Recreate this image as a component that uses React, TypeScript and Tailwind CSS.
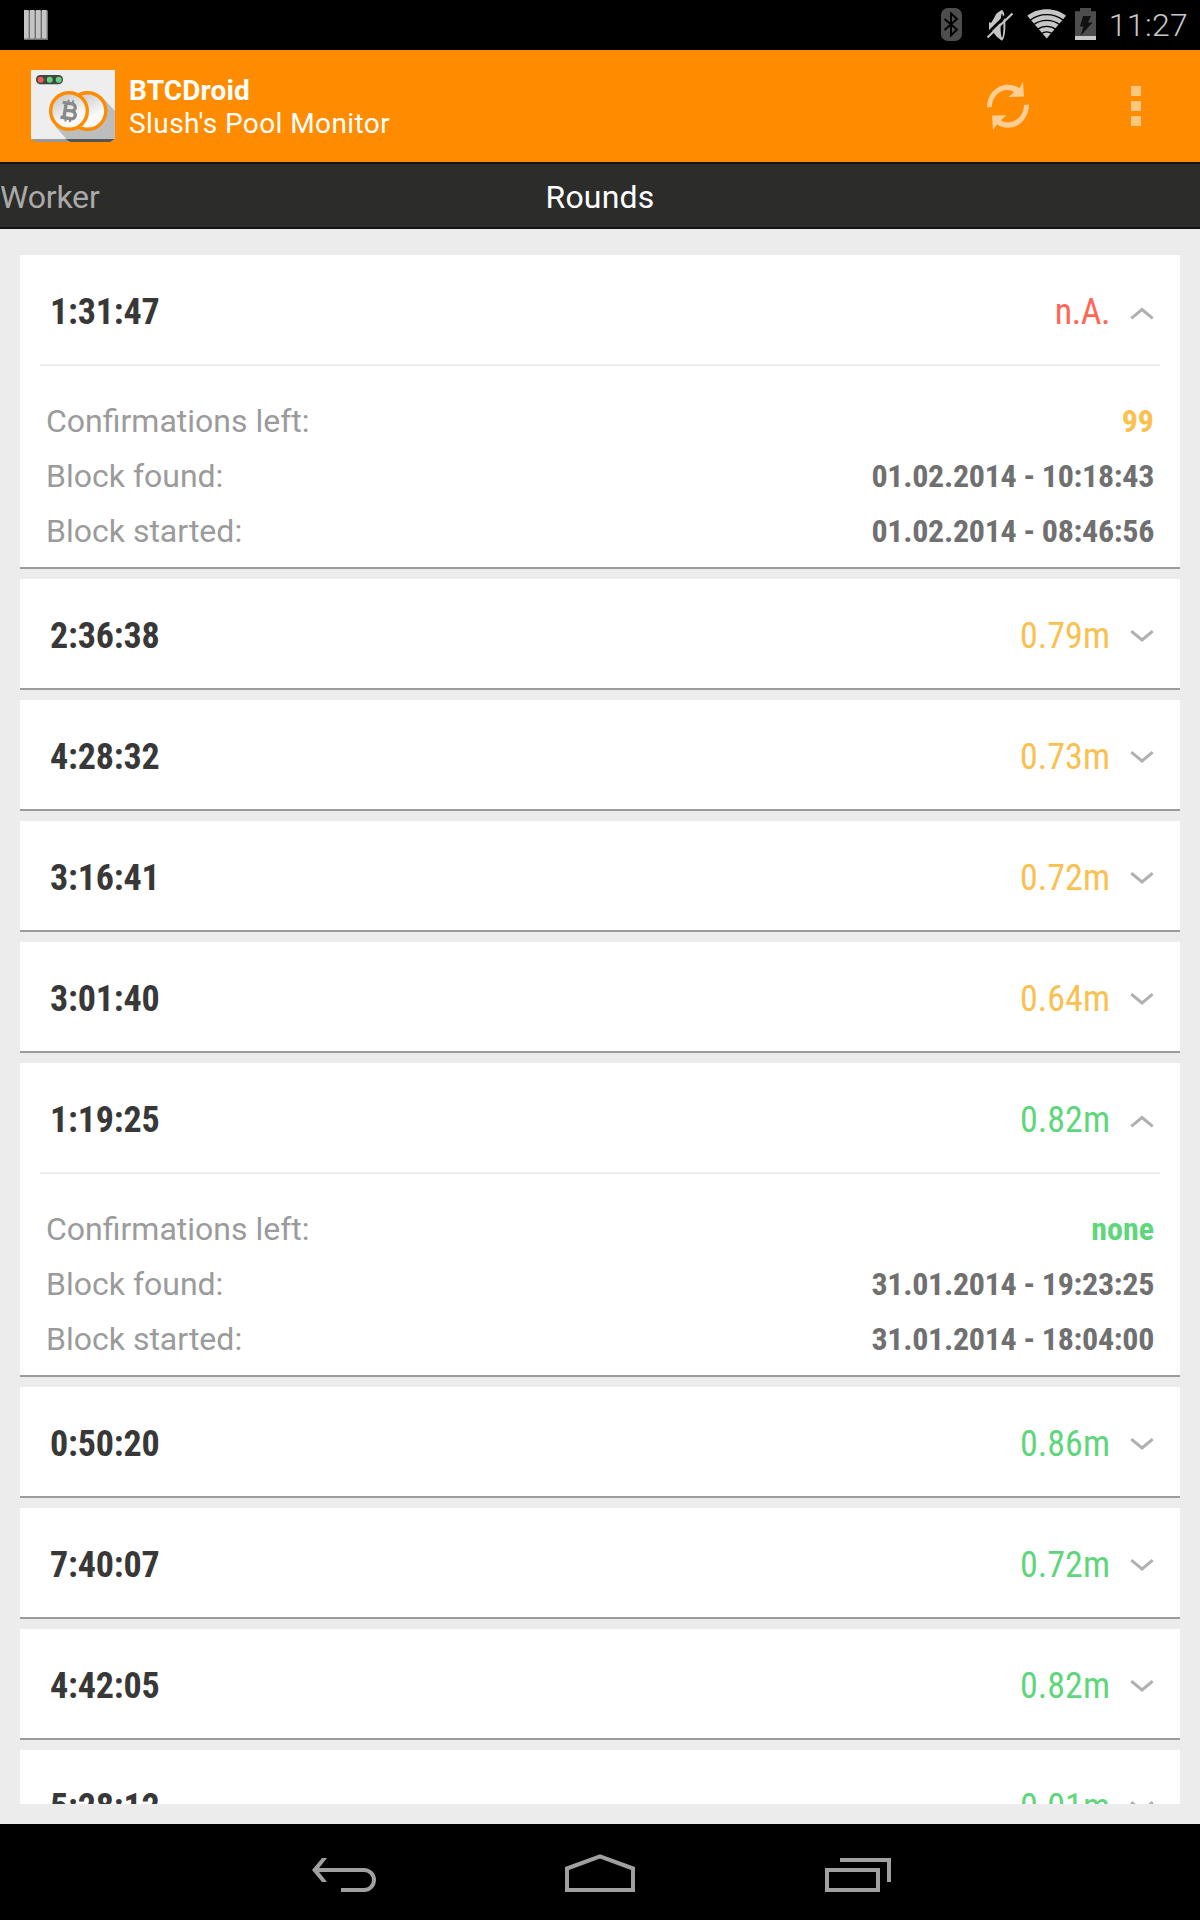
import type { ReactNode } from "react";

type Tone = "red" | "amber" | "green";

type Details = { confirmations: string; found: string; started: string };

type Round = { duration: string; reward: string; tone: Tone; details?: Details };

const toneClass: Record<Tone, string> = {
  red: "text-[#ff6655] tracking-[-0.5px]",
  amber: "text-[#fac050]",
  green: "text-[#5fd67c]",
};

const rounds: Round[] = [
  {
    duration: "1:31:47",
    reward: "n.A.",
    tone: "red",
    details: { confirmations: "99", found: "01.02.2014 - 10:18:43", started: "01.02.2014 - 08:46:56" },
  },
  { duration: "2:36:38", reward: "0.79m", tone: "amber" },
  { duration: "4:28:32", reward: "0.73m", tone: "amber" },
  { duration: "3:16:41", reward: "0.72m", tone: "amber" },
  { duration: "3:01:40", reward: "0.64m", tone: "amber" },
  {
    duration: "1:19:25",
    reward: "0.82m",
    tone: "green",
    details: { confirmations: "none", found: "31.01.2014 - 19:23:25", started: "31.01.2014 - 18:04:00" },
  },
  { duration: "0:50:20", reward: "0.86m", tone: "green" },
  { duration: "7:40:07", reward: "0.72m", tone: "green" },
  { duration: "4:42:05", reward: "0.82m", tone: "green" },
  { duration: "5:28:12", reward: "0.01m", tone: "green" },
];

function StatusBar() {
  return (
    <div className="flex h-[50px] shrink-0 items-center justify-between bg-black pl-6 pr-3">
      <svg width="24" height="30" viewBox="0 0 24 30">
        {[0, 6, 12, 18].map((x) => (
          <g key={x}>
            <rect x={x} y="0.5" width="6" height="29.5" fill="#6e6e6e" />
            <rect x={x} y="0" width="4.6" height="28.5" fill="#c4c4c4" />
          </g>
        ))}
      </svg>
      <div className="flex h-full items-start">
        <svg width="166" height="50" viewBox="1034 0 166 50">
          <rect x="1041" y="8" width="21" height="33" rx="7" fill="#4d4d4d" />
          <path d="M1044.500 19l12.500 10.500-6 6V13.500l6 5.500-12.500 11" fill="none" stroke="#000" strokeWidth="1.900" />
          <path d="M1089 22.500h2.500l5-9 5-3.500c2.500 0 3.900 6.500 3.900 15s-1.400 15.500-3.900 15.500l-5-4-5-6.500h-2.500z" fill="#c6c6c6" />
          <ellipse cx="1102" cy="25.500" rx="1.500" ry="12" fill="#000" />
          <path d="M1085.500 35.500l25-24.500" stroke="#000" strokeWidth="2.800" />
          <path d="M1087.500 37.500l25-24" stroke="#c6c6c6" strokeWidth="2.100" />
          <path d="M1146.700 38.600L1127.300 15.800C1138 7.200 1155.400 7.200 1166 15.800z" fill="#c6c6c6" />
          <g fill="none" stroke="#000" strokeWidth="1.300">
            <path d="M1130 20.300c9.500-7.600 24-7.600 33.400 0" />
            <path d="M1133.500 24.800c7.500-5.900 19-5.900 26.400 0" />
            <path d="M1137.500 29.400c5.200-4 13.200-4 18.400 0" />
            <path d="M1141.500 33.600c3-2.300 7.400-2.300 10.400 0" />
          </g>
          <path d="M1175 11.300h5V8h11v3.300h5V36h-21z" fill="#4d4d4d" />
          <path d="M1175 36h21v4h-21z" fill="#c9c9c9" />
          <path d="M1183 16h8l-3 6.500h4.500L1180.500 36l3-9.500h-3.500z" fill="#111" />
        </svg>
        <span className="ml-[9px] text-[32px] font-light leading-[50px] tracking-[0.3px] text-[#c8c8c8]">11:27</span>
      </div>
    </div>
  );
}

function AppLogo() {
  return (
    <svg width="84" height="72" viewBox="0 0 84 72">
      <defs>
        <linearGradient id="coin" x1="0.2" y1="0" x2="0.7" y2="1">
          <stop offset="0" stopColor="#c4c4c4" />
          <stop offset="0.7" stopColor="#fafafa" />
        </linearGradient>
      </defs>
      <path d="M0 68h84l-4.500 4h-75z" fill="#999" />
      <rect width="84" height="69" fill="#eee" />
      <path d="M70 26l14 15v31H38L24 56z" fill="#bdbdbd" />
      <path d="M34.500 69H84l-4.500 3H39z" fill="#555" />
      <path d="M79.500 72L84 69v3z" fill="#ff8c00" />
      <rect x="5" y="5.500" width="27" height="9.500" rx="4.700" fill="#bbb" />
      <rect x="5" y="5" width="27" height="9" rx="4.500" fill="#444" />
      <circle cx="9.700" cy="9.700" r="3" fill="#f05e50" />
      <circle cx="18.700" cy="9.700" r="3" fill="#5fd67c" />
      <circle cx="27.700" cy="9.700" r="3" fill="#5fd67c" />
      <circle cx="56.500" cy="41" r="18.300" fill="url(#coin)" stroke="#ff8c00" strokeWidth="3.400" />
      <circle cx="38" cy="41" r="18.300" fill="url(#coin)" stroke="#ff8c00" strokeWidth="3.400" />
      <g transform="translate(38.500 41) rotate(9)" fill="none" stroke="#8a8a8a">
        <path d="M-8-7.500H1.500a3.500 3.500 0 0 1 0 7.200H-4.500M1.500-0.300H2.500a3.800 3.800 0 0 1 0 7.800H-8M-4.500-7.500V7.500" strokeWidth="3.400" />
        <path d="M-2.500-11v4M2-11v4M-2.500 7v4M2 7v4" strokeWidth="2" />
      </g>
    </svg>
  );
}

function ActionBar() {
  return (
    <header className="flex h-28 shrink-0 items-center bg-[#ff8c00] pl-[31px] pr-[59px] text-white">
      <div className="mb-[1px] h-[72px]">
        <AppLogo />
      </div>
      <div className="ml-[14px] flex flex-col pt-[2px] text-[28px] leading-[33px]">
        <span className="font-bold tracking-[0.15px]">BTCDroid</span>
        <span className="tracking-[0.42px]">Slush's Pool Monitor</span>
      </div>
      <svg className="ml-auto" width="44" height="50" viewBox="986 81 44 50">
        <g fill="#ffce94">
          <path d="M987 107.500C987 95 996 84.700 1008 84.700c4.500 0 8.500 1.300 11.500 3.400L1023 82l1 14.500-15.500.5 5.500-4.800c-2-1.500-4-2.200-6.500-2.200-9 0-15.700 8-15.700 17z" />
          <path d="M1029 104.500C1029 117 1020 127.700 1008 127.700c-4.500 0-8.500-1.300-11-3.400L993 130l-1-14.500 14.500-.3-5.500 5c2 1.500 4.500 2.200 7 2.200 9 0 16-8 16-17.400z" />
        </g>
      </svg>
      <div className="ml-[101px] flex flex-col gap-[5px]">
        <i className="size-[10px] bg-[#ffc680]" />
        <i className="size-[10px] bg-[#ffc680]" />
        <i className="size-[10px] bg-[#ffc680]" />
      </div>
    </header>
  );
}

function Tabs() {
  return (
    <nav className="grid h-[67px] shrink-0 grid-cols-3 border-y-2 border-[#141414] bg-[#2c2c2a] text-[32px] leading-[66px]">
      <span className="tracking-[-0.2px] text-[#aaaaa8]">Worker</span>
      <span className="text-center tracking-[0.2px] text-white">Rounds</span>
    </nav>
  );
}

function Chevron({ up }: { up: boolean }) {
  return (
    <svg className="mt-[3px]" width="24" height="14" viewBox="0 0 24 14" fill="none" stroke="#b0b0b0" strokeWidth="3">
      <path d={up ? "M1.300 12.300L12 3.500l10.700 8.800" : "M1.300 1.200L12 10l10.700-8.800"} />
    </svg>
  );
}

function DetailRow({ label, tone, children }: { label: string; tone: string; children: ReactNode }) {
  return (
    <div className="flex justify-between text-[32px] leading-[55px]">
      <span className="text-[#9b9b9b]">{label}</span>
      <span className={`font-bold [font-stretch:75%] ${tone}`}>{children}</span>
    </div>
  );
}

function RoundCard({ round }: { round: Round }) {
  const { details } = round;
  return (
    <section className="shrink-0 border-b-2 border-[#9b9b9b] bg-white">
      <div className="flex h-[109px] items-center pl-[30px] pr-[26px] pt-1 text-[36px] leading-[42px]">
        <span className="font-bold tracking-[-0.15px] text-[#383838] [font-stretch:75%]">{round.duration}</span>
        <span className={`ml-auto mr-[20px] [font-stretch:75%] ${toneClass[round.tone]}`}>{round.reward}</span>
        <Chevron up={!!details} />
      </div>
      {details && (
        <div className="mx-5 h-[203px] border-t-2 border-[#ececec] px-[6px] pt-7">
          <DetailRow label="Confirmations left:" tone={round.tone === "green" ? toneClass.green : toneClass.amber}>
            {details.confirmations}
          </DetailRow>
          <DetailRow label="Block found:" tone="text-[#707070] tracking-[-0.3px]">
            {details.found}
          </DetailRow>
          <DetailRow label="Block started:" tone="text-[#707070] tracking-[-0.3px]">
            {details.started}
          </DetailRow>
        </div>
      )}
    </section>
  );
}

function NavigationBar() {
  return (
    <footer className="flex h-24 shrink-0 items-start justify-between bg-black px-[300px] pt-4">
      <svg width="100" height="70" viewBox="0 0 100 70">
        <path d="M16 30H64a10 10 0 0 1 0 20H41" fill="none" stroke="#a0a0a0" strokeWidth="4" />
        <path d="M12 30l10-12h5L17.500 30 27 42h-5z" fill="#a0a0a0" />
      </svg>
      <svg width="100" height="70" viewBox="0 0 100 70" fill="none" stroke="#a0a0a0" strokeWidth="4">
        <path d="M17 50V28.500L50 16.300l33 12.200V50z" />
      </svg>
      <svg width="100" height="70" viewBox="0 0 100 70" fill="none" stroke="#a0a0a0" strokeWidth="4">
        <path d="M27 30h51v20H27zM40 20h49v22" />
      </svg>
    </footer>
  );
}

export default function App() {
  return (
    <div className="flex h-[1920px] w-[1200px] flex-col overflow-hidden bg-[#ececec] font-['Roboto',sans-serif]">
      <StatusBar />
      <ActionBar />
      <Tabs />
      <main className="mx-5 mb-5 mt-[26px] flex min-h-0 flex-1 flex-col gap-[10px] overflow-hidden">
        {rounds.map((round) => (
          <RoundCard key={round.duration} round={round} />
        ))}
      </main>
      <NavigationBar />
    </div>
  );
}
